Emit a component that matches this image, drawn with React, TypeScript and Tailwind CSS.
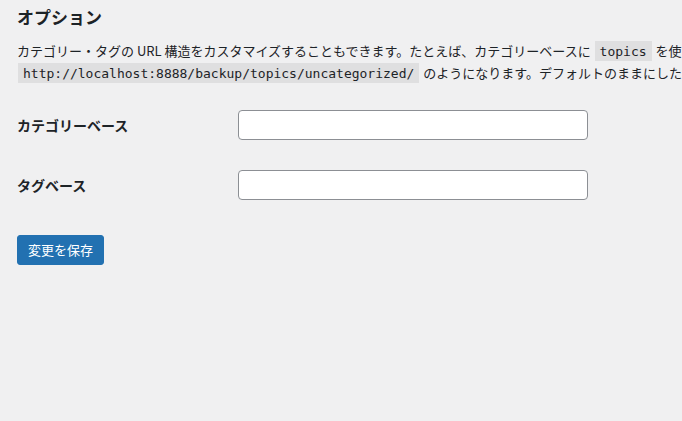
export default function App() {
  const rows = [
    { label: 'カテゴリーベース', id: 'category_base' },
    { label: 'タグベース', id: 'tag_base' },
  ];

  return (
    <div
      className="min-h-[421px] w-[682px] overflow-hidden bg-[#f0f0f1] px-[17px] text-[#1d2327]"
      style={{ fontFamily: '"Noto Sans CJK JP", "Noto Sans", sans-serif' }}
    >
      {/* Heading */}
      <h2 className="flex h-[33px] items-center text-[17px] font-bold">オプション</h2>

      {/* Description */}
      <p className="mt-[7px] whitespace-nowrap text-[13px] leading-[21px]">
        カテゴリー・タグの URL 構造をカスタマイズすることもできます。たとえば、カテゴリーベースに{' '}
        <code className="mx-px bg-black/[0.07] px-[5px] pt-[3px] pb-[2px] font-['DejaVu_Sans_Mono',monospace] text-[13px]">
          topics
        </code>{' '}
        を使うとカテゴリーのリンクは
        <br />
        <code className="mx-px bg-black/[0.07] px-[5px] pt-[3px] pb-[2px] font-['DejaVu_Sans_Mono',monospace] text-[13px]">
          http://localhost:8888/backup/topics/uncategorized/
        </code>{' '}
        のようになります。デフォルトのままにしたい場合は空欄にしてください。
      </p>

      {/* Form rows */}
      <div className="mt-[11px] flex flex-col">
        {rows.map((row) => (
          <div key={row.id} className="flex h-[60px] items-center">
            <label htmlFor={row.id} className="w-[221px] text-[14px] font-bold">
              {row.label}
            </label>
            <input
              id={row.id}
              type="text"
              className="h-[30px] w-[350px] rounded-[4px] border border-[#8c8f94] bg-white px-2 text-[14px] outline-none"
            />
          </div>
        ))}
      </div>

      {/* Submit */}
      <button className="mt-[20px] flex h-[30px] items-center rounded-[3px] border border-[#2271b1] bg-[#2271b1] px-[10px] text-[13px] text-white">
        変更を保存
      </button>
    </div>
  );
}
